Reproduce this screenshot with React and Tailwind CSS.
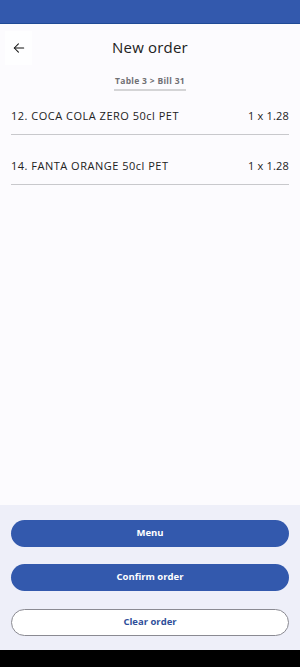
import React from "react";

const items = [
  { name: "12. COCA COLA ZERO 50cl PET", qty: "1 x 1.28" },
  { name: "14. FANTA ORANGE 50cl PET", qty: "1 x 1.28" },
];

export default function App() {
  return (
    <div className="w-[300px] h-[667px] flex flex-col bg-[#fcfbfe] overflow-hidden" style={{ fontFamily: '"Open Sans", "Noto Sans", sans-serif' }}>
      <div className="h-[24px] bg-[#3359ad] border-b border-[#1f4a96] shrink-0" />
      <div className="relative h-[46px] flex items-center justify-center shrink-0">
        <div className="absolute left-[5px] top-[7px] w-[27px] h-[34px] bg-[#fefeff] flex items-center justify-center">
          <svg width="14" height="14" viewBox="0 0 24 24" fill="none" stroke="#111" strokeWidth="1.8" strokeLinecap="round" strokeLinejoin="round">
            <path d="M20 12H4" />
            <path d="M11 5l-7 7 7 7" />
          </svg>
        </div>
        <span className="text-[15px] text-[#222] tracking-[0.2px]">New order</span>
      </div>
      <div className="flex justify-center shrink-0 pt-[4px]">
        <div className="px-[1px] pb-[2px] leading-[13px] border-b-2 border-[#d4d4d6] text-[8.5px] font-bold text-[#707074] tracking-[0.3px]">
          Table 3 &gt; Bill 31
        </div>
      </div>
      <div className="flex-1 px-[11px]">
        {items.map((it, i) => (
          <div key={it.name} className={`${i === 0 ? "pt-[18px]" : "pt-[24px]"} pb-[11px] leading-[14px] flex items-center justify-between border-b border-[#c8c8cc] text-[11px] text-[#222] tracking-[0.5px]`}>
            <span>{it.name}</span>
            <span className="tracking-[0.2px]">{it.qty}</span>
          </div>
        ))}
      </div>
      <div className="h-[145px] bg-[#eeeff9] shrink-0 px-[11px] pt-[15px] flex flex-col gap-[17px]">
        <button className="h-[27px] shrink-0 rounded-full bg-[#3359ad] text-white text-[9.5px] font-bold">Menu</button>
        <button className="h-[27px] shrink-0 rounded-full bg-[#3359ad] text-white text-[9.5px] font-bold">Confirm order</button>
        <button className="h-[27px] shrink-0 mt-[1px] rounded-full bg-white border border-[#8a8a92] text-[#2f4f9a] text-[9.5px] font-bold">Clear order</button>
      </div>
      <div className="h-[17px] bg-black shrink-0" />
    </div>
  );
}
